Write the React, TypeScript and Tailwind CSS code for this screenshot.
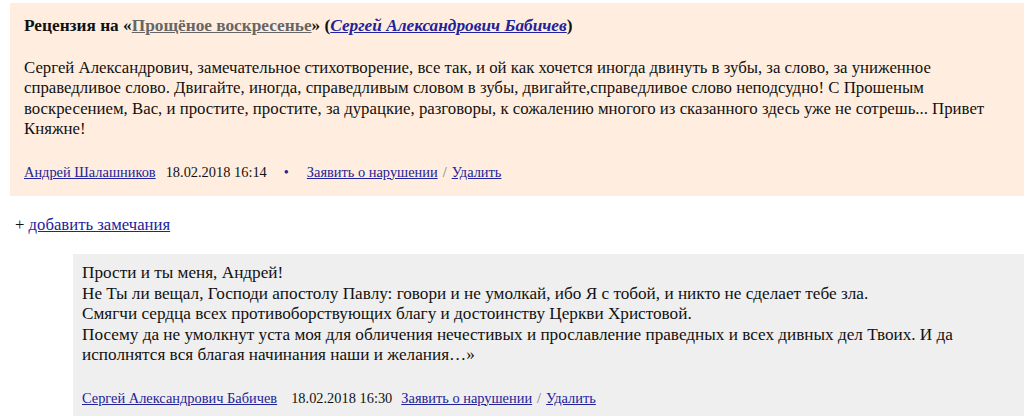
export default function App() {
  const link = "text-[#22229a] underline";
  return (
    <div className="min-h-[416px] bg-white font-['Liberation_Serif',serif] text-[16px] leading-[20.5px] text-[#111]">
      <div className="h-[3px]" />
      <div className="ml-[10px] bg-[#ffeedf] pl-[14px] pr-[8px] pt-[13px] pb-[15px]">
        <div className="text-[17.3px] font-bold">
          Рецензия на «<span className="text-[#666] underline">Прощёное воскресенье</span>» (
          <span className={`${link} italic`}>Сергей Александрович Бабичев</span>)
        </div>
        <p className="mt-[21px] text-[16.8px]">
          Сергей Александрович, замечательное стихотворение, все так, и ой как хочется иногда двинуть в зубы, за слово, за униженное справедливое слово. Двигайте, иногда, справедливым словом в зубы, двигайте,справедливое слово неподсудно! С Прошеным воскресением, Вас, и простите, простите, за дурацкие, разговоры, к сожалению многого из сказанного здесь уже не сотрешь... Привет Княжне!
        </p>
        <div className="mt-[23px] flex items-center text-[14.4px] leading-[18px]">
          <span className={link}>Андрей Шалашников</span>
          <span className="ml-[10px]">18.02.2018 16:14</span>
          <span className="ml-[17px] text-[#22229a]">•</span>
          <span className="ml-[18px] flex items-center gap-[5px]">
            <span className={link}>Заявить о нарушении</span>
            <span className="text-[#777]">/</span>
            <span className={link}>Удалить</span>
          </span>
        </div>
      </div>
      <div className="ml-[15px] mt-[19px] text-[16.7px]">
        + <span className={link}>добавить замечания</span>
      </div>
      <div className="ml-[73px] mt-[19px] bg-[#efefef] pl-[9px] pr-[8px] pt-[9px] pb-[12px]">
        <p className="text-[17.2px]">
          Прости и ты меня, Андрей!
          <br />
          Не Ты ли вещал, Господи апостолу Павлу: говори и не умолкай, ибо Я с тобой, и никто не сделает тебе зла.
          <br />
          Смягчи сердца всех противоборствующих благу и достоинству Церкви Христовой.
          <br />
          Посему да не умолкнут уста моя для обличения нечестивых и прославление праведных и всех дивных дел Твоих. И да исполнятся вся благая начинания наши и желания…»
        </p>
        <div className="mt-[23px] flex items-center text-[14.4px] leading-[18px]">
          <span className={link}>Сергей Александрович Бабичев</span>
          <span className="ml-[14px]">18.02.2018 16:30</span>
          <span className="ml-[9px] flex items-center gap-[5px]">
            <span className={link}>Заявить о нарушении</span>
            <span className="text-[#777]">/</span>
            <span className={link}>Удалить</span>
          </span>
        </div>
      </div>
    </div>
  );
}
